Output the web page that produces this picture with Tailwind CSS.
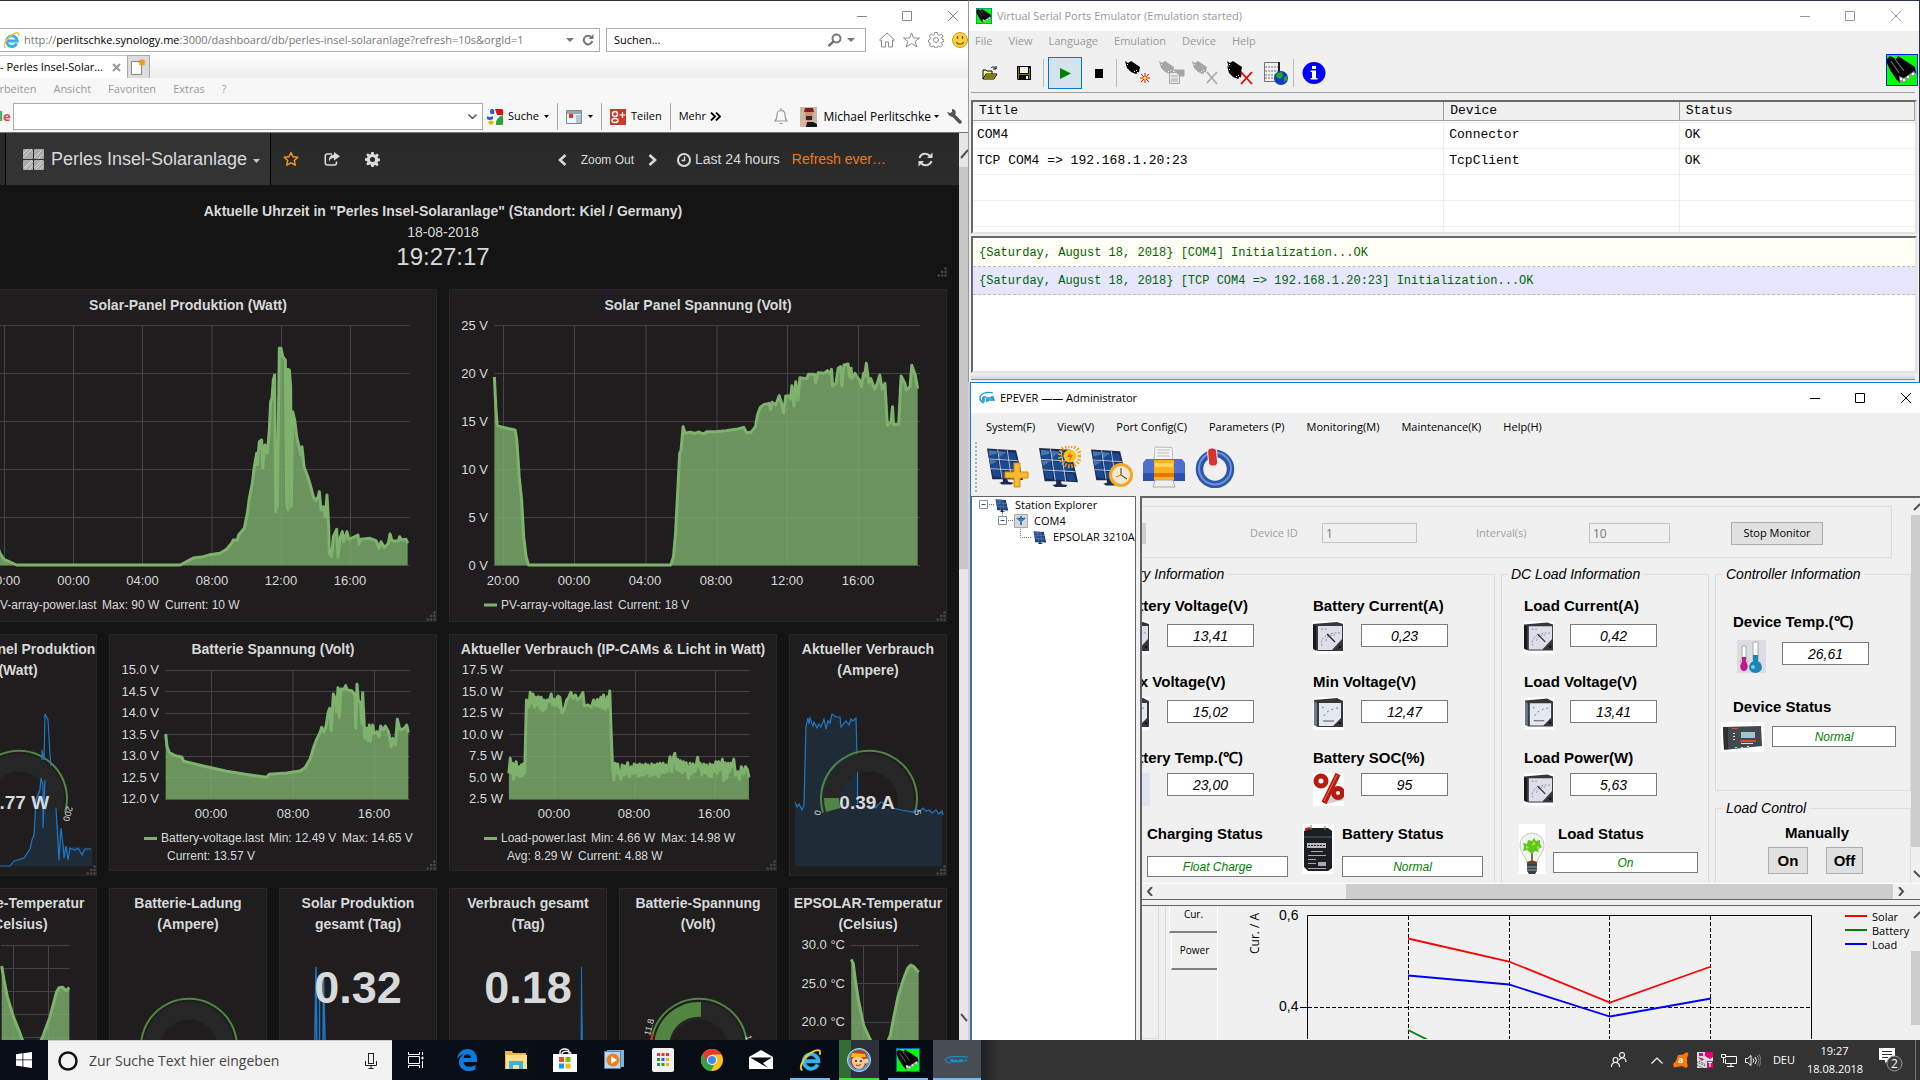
<!DOCTYPE html>
<html lang="de">
<head>
  <meta charset="UTF-8" />
  <meta name="viewport" content="width=device-width, initial-scale=1.0"/>
  <title>Perles Insel-Solaranlage</title>
  <script src="https://cdn.jsdelivr.net/npm/@tailwindcss/browser@4"></script>
</head>
<body class="h-screen flex flex-col overflow-hidden bg-[#2b3240] font-['Open_Sans',sans-serif] text-[11px] text-black">

  <!-- Shared symbols -->
  <svg class="hidden">
    <symbol id="grip" viewBox="0 0 10 10"><g fill="#4a4a4a"><circle cx="8.500" cy="1.500" r="1.300"/><circle cx="5.200" cy="5" r="1.300"/><circle cx="8.500" cy="5" r="1.300"/><circle cx="1.700" cy="8.500" r="1.300"/><circle cx="5.200" cy="8.500" r="1.300"/><circle cx="8.500" cy="8.500" r="1.300"/></g></symbol>
    <symbol id="meter" viewBox="0 0 31 33">
      <path fill="#fff" d="M0 0h31v33H0z"/><path fill="#34373c" d="M0 3 24 1l6 2v27H5L0 28z"/><path fill="#16181b" d="M0 4l3 1v25l-3-3z"/>
      <path fill="#dcdfe9" d="M5 5h24v13l-10 11H5z"/><path stroke="#889" stroke-width=".9" fill="none" d="M8 8h6M9 25c-3-8 6-14 18-13M13 20c0-4 4-6 9-6" stroke-dasharray="2 1.500"/><path stroke="#222" stroke-width="1.200" d="m14 13 8 8"/><circle cx="27" cy="26" r="1.300" fill="#111"/>
    </symbol>
    <symbol id="meter2" viewBox="0 0 31 33">
      <path fill="#fff" d="M0 0h31v33H0z"/><path fill="#34373c" d="M1 3 24 1l6 3v26H5L1 28z"/><path fill="#6d7b88" d="M1 4l3 2v24l-3-3z"/>
      <path fill="#e2e9f1" d="M6 6h22v15l-8 8H6z"/><path stroke="#778" stroke-width="1" fill="none" d="M9 10l2 1M11 19c2-4 6-7 14-8" stroke-dasharray="2 3"/><path stroke="#555" d="M10 24h11"/><circle cx="27" cy="26" r="1.300" fill="#111"/>
    </symbol>
    <symbol id="panel" viewBox="0 0 42 42">
      <path fill="#1c2a50" d="m0 1 33 2 8 34-18-1 1 3 6 1-2 2H17l-3-2 4-1v-3H6z"/><path fill="#174a93" d="m2 3 9 1 1 9-9-1zM13 4l9 1 2 9-10-1zM24 5l8 1 2 9-9-1zM3 14l9 1 2 9-9-1zM15 15l9 1 2 9-10-1zM26 16l8 1 2 9-9-1zM5 25l9 1 1 8-8-1zM16 26l10 1 1 8-10-1zM28 27l8 1 3 8-9-1z"/><path fill="#6f9fd8" opacity=".5" d="m2 3 9 1v3L2 9zM13 4l9 1-8 6zM3 14l9 1-8 5z"/><path stroke="#dce8fa" stroke-width=".9" fill="none" d="m12 2 5 33M23 3l5 33M2 13l33 2M4 24l34 2"/>
    </symbol>
    <symbol id="plug" viewBox="0 0 32 32">
      <path fill="#0f0" d="M0 0h32v32H0z"/><path fill="#000" d="m1 5 3-3 6 3 2-3 17 11 1 6-16 10-4-4-6-9-3-7z"/><path stroke="#888" fill="none" d="M5 7l8 12M9 5l9 12"/><path fill="#999" d="m13 22 5 2 10-7 2 3-16 10z"/><path fill="#fff" d="M14 24h2v2h-2zM17 25h2v2h-2zM21 22h2v2h-2zM26 19h2v2h-2z"/><path fill="none" stroke="#0018ff" d="M.5.5h31v31H.5z"/>
    </symbol>
    <symbol id="conn" viewBox="0 0 16 16"><path d="M0 1l3 2 3-2 9 6-1 5-3 2-5-2-4-4z"/><path fill="#fff" d="M9 11h1v1H9zM11 10h1v1h-1zM12 12h1v1h-1zM2 4h1v1H2z"/></symbol>
    <symbol id="winbtns" viewBox="0 0 102 12"><path fill="none" stroke="currentColor" d="M0 6.500h10M45.500 1.500h9v9h-9zM91 1l10 10M101 1 91 11"/></symbol>
    <symbol id="ie" viewBox="0 0 20 20"><path fill="none" stroke="#35b1ea" stroke-width="3.400" d="M16.200 13.500A6.300 6.300 0 1 1 16.800 10.600H6"/><path fill="none" stroke="#f6c62f" stroke-width="1.700" d="M3 18.500C-1 17 4 7 11 3s8-1.500 7 2"/></symbol>
  </svg>

  <main class="flex-1 min-h-0 grid grid-cols-[121fr_119fr]">

    <!-- Internet Explorer -->
    <section class="min-w-0 min-h-0 flex flex-col overflow-hidden border-t border-[#333] bg-white">
      <div class="h-[27px] flex justify-end items-center pt-[2px] pr-[9px]">
        <svg class="w-[102px] h-3 text-[#888]"><use href="#winbtns"/></svg>
      </div>
      <div class="h-6 flex gap-[6px] text-[#777]">
        <div class="w-[600px] flex items-center border border-l-0 border-[#adadad] pl-[3px] pr-[5px]">
          <svg class="w-[17px] h-[17px] mr-1"><use href="#ie"/></svg>
          <span class="flex-1 whitespace-nowrap">http://<span class="text-black">perlitschke.synology.me</span>:3000/dashboard/db/perles-insel-solaranlage?refresh=10s&amp;orgId=1</span>
          <svg class="w-2 h-1 mr-2" viewBox="0 0 8 4"><path fill="#777" d="M0 0h8L4 4z"/></svg>
          <svg class="w-3 h-3" viewBox="0 0 12 12"><path fill="none" stroke="#777" stroke-width="2" d="M9.500 3.500A4.300 4.300 0 1 0 10.300 7"/><path fill="#777" d="M11.500 0v5h-5z"/></svg>
        </div>
        <div class="w-[260px] flex items-center border border-[#adadad] px-[7px]">
          <input aria-label="Suchen" class="flex-1 min-w-0 outline-none placeholder:text-black" placeholder="Suchen..."/>
          <svg class="w-[14px] h-[14px] mr-[5px]" viewBox="0 0 14 14"><circle cx="8.500" cy="5.500" r="4" fill="none" stroke="#777" stroke-width="2"/><path stroke="#777" stroke-width="2.400" d="m5.500 8.500-5 4.500"/></svg>
          <svg class="w-2 h-1 mr-[3px]" viewBox="0 0 8 4"><path fill="#777" d="M0 0h8L4 4z"/></svg>
        </div>
        <div class="flex items-center gap-2 pl-[7px] text-[#8a8a8a]">
          <svg class="w-4 h-4" viewBox="0 0 16 16" fill="none" stroke="currentColor"><path d="M.5 8 8 1l7.500 7-1 .8-1-.8v7h-4v-5h-3v5h-4V8l-1 .8z"/></svg>
          <svg class="w-[17px] h-4" viewBox="0 0 17 16" fill="none" stroke="currentColor"><path d="m8.500 1 2 5h6l-4.500 3.500 2 5.500-5.500-3.500L3 15l2-5.500L.5 6h6z"/></svg>
          <svg class="w-4 h-4" viewBox="0 0 16 16" fill="none" stroke="currentColor"><path d="M6.500.5h3l.3 2 1.600.8 1.900-1.200 1.700 2-1.200 1.800.5 1.400 1.700.5v1.500l-2 .7-.5 1.500 1.100 1.700-2 1.900-1.700-1.200-1.500.6-.4 1.500h-2l-.5-1.500-1.600-.6-1.700 1.200-1.900-1.900L2.400 12l-.6-1.500-1.300-.5V8l1.400-.5.6-1.600L1.200 4l2-2 1.700 1.300 1.400-.7z"/><circle cx="8" cy="8" r="2.500"/></svg>
          <svg class="w-4 h-4" viewBox="0 0 16 16"><circle cx="8" cy="8" r="7.500" fill="#fbd13c" stroke="#c99a1b"/><path fill="none" stroke="#6b4e00" stroke-width="1.200" d="M5.500 4v3M10.500 4v3M4 10c2 3 6 3 8 0"/></svg>
        </div>
      </div>
      <div class="h-[26px] flex pt-[3px] bg-linear-to-b from-white to-[#ececec]">
        <div class="w-[127px] flex items-center justify-between pr-[6px] bg-white border-t border-[#c4c4c4] whitespace-nowrap">- Perles Insel-Solar...
          <svg class="w-[9px] h-[9px]" viewBox="0 0 9 9"><path stroke="#999" stroke-width="2" d="m1 1 7 7M8 1 1 8"/></svg>
        </div>
        <button aria-label="Neuer Tab" class="w-[23px] flex items-center justify-center bg-[#dcdcdc] border border-b-0 border-[#a8a8a8]">
          <svg class="w-[15px] h-4" viewBox="0 0 15 16"><path fill="#fff" stroke="#888" d="M.5 2.500h10v13H.5z"/><path stroke="#f09a1a" stroke-width="1.400" d="M11 0v7M7.500 3.500h7M8.500 1l5 5M13.500 1l-5 5"/></svg>
        </button>
      </div>
      <nav class="h-[23px] flex items-center gap-[17px] bg-[#f7f7f7] text-[#999]">
        <a href="#" class="-ml-5">Bearbeiten</a><a href="#">Ansicht</a><a href="#">Favoriten</a><a href="#">Extras</a><a href="#">?</a>
      </nav>
      <div class="h-8 flex items-center bg-[#f7f7f7] border-b border-[#777]">
        <span class="w-[14px] font-bold text-[13px] text-[#ea4335] -ml-px"><span class="text-[#34a853]">l</span>e</span>
        <div class="w-[470px] h-[27px] flex items-center border border-[#a9acb2] bg-white pr-[5px]">
          <input aria-label="Google-Suche" class="flex-1 outline-none"/>
          <svg class="w-[9px] h-[5px]" viewBox="0 0 9 5"><path fill="none" stroke="#444" stroke-width="1.300" d="m.5.500 4 4 4-4"/></svg>
        </div>
        <button class="flex items-center gap-[5px] pl-1 pr-2 h-[27px] border-r border-[#aaa]">
          <svg class="w-4 h-4" viewBox="0 0 16 16"><path fill="#1d62d0" d="M4 0h2q2 1 1 5H4Q2 3 4 0z"/><path fill="#e01010" d="M8 0h7l1 1v5H10z"/><path fill="#1d62d0" d="M0 7q3 2 6 0v3q-3 2-6 0z"/><path fill="#2aa33a" d="M16 6v9l-1 1H9q-1-7 7-10z"/><path fill="#f5b400" d="M1 13q3-3 6 0-1 3-3 3t-3-3z"/></svg>
          Suche <svg class="w-[5px] h-[3px]" viewBox="0 0 5 3"><path d="M0 0h5L2.500 3z"/></svg>
        </button>
        <button aria-label="Ansicht" class="flex items-center gap-[6px] px-2 h-[27px] border-r border-[#aaa]">
          <svg class="w-4 h-4" viewBox="0 0 16 16"><path fill="#eef3f7" stroke="#7c8a96" d="M.5 1.500h15v13H.5z"/><path fill="#9aa6b0" d="M1 2h14v3H1z"/><path fill="#d33" d="M3 5h4v4H3z"/><path fill="#b9c3cc" d="M10 6h5v8h-5z"/></svg>
          <svg class="w-[5px] h-[3px]" viewBox="0 0 5 3"><path d="M0 0h5L2.500 3z"/></svg>
        </button>
        <button class="flex items-center gap-[5px] px-2 h-[27px] border-r border-[#aaa]">
          <svg class="w-4 h-4" viewBox="0 0 16 16"><path fill="#c8392b" d="M0 0h16v16H0z"/><circle cx="5" cy="5" r="2.500" fill="none" stroke="#fff" stroke-width="1.400"/><ellipse cx="5" cy="11.500" rx="3" ry="2" fill="none" stroke="#fff" stroke-width="1.400"/><path stroke="#fff" stroke-width="1.200" d="M12.500 3v6M9.500 6h6"/></svg>
          Teilen
        </button>
        <button class="flex items-center gap-1 px-2">Mehr <svg class="w-[11px] h-[9px]" viewBox="0 0 11 9"><path fill="none" stroke="#000" stroke-width="1.800" d="m1 .500 4 4-4 4M6 .5l4 4-4 4"/></svg></button>
        <div class="ml-auto flex items-center">
          <svg class="w-[14px] h-[17px] mr-3" viewBox="0 0 14 17"><path fill="none" stroke="#999" stroke-width="1.200" d="M1 13c2-2 2-3 2-6s2-4.500 4-4.500S11 4 11 7s0 4 2 6zM7 0v2M5.500 15.500h3"/></svg>
          <svg class="w-[17px] h-5 mr-[6px]" viewBox="0 0 17 20"><path fill="#c9b7a5" d="M0 0h17v20H0z"/><path fill="#7a1f22" d="M5 1h8l1 4H4z"/><path fill="#cf8f74" d="M5 5h8v7l-4 3-4-3z"/><path fill="#3d2520" d="M6 9h6v4H6z"/><path fill="#e0b49b" d="M1 13h5v7H1z"/><path fill="#151515" d="M6 20l1-5h6l4 2v3z"/></svg>
          <span class="text-[12px]">Michael Perlitschke</span>
          <svg class="w-[5px] h-[3px] ml-[3px] mr-2" viewBox="0 0 5 3"><path d="M0 0h5L2.500 3z"/></svg>
          <svg class="w-[15px] h-[15px] mr-[6px]" viewBox="0 0 15 15"><path stroke="#555" stroke-width="3.500" stroke-linecap="round" d="m6 6 7 7"/><path fill="#555" d="M0 3l3 1 2-1V0c3 0 5 3 3 6S2 8 0 3z"/></svg>
        </div>
      </div>

      <!-- Grafana -->
      <div class="flex-1 min-h-0 flex font-['Liberation_Sans',Arial,sans-serif] text-[#d8d9da]">
        <div class="flex-1 min-w-0 flex flex-col overflow-hidden bg-[#141414]">
          <header class="h-[52px] shrink-0 flex items-center bg-linear-to-b from-[#292929] to-[#2c2c2c] text-[14px]">
            <button class="h-full ml-[5px] pl-[17px] pr-[10px] flex items-center border-x border-black bg-[#333] text-[18px] whitespace-nowrap">
              <svg class="w-[21px] h-[21px] mr-[7px]" viewBox="0 0 21 21"><g fill="#aaa"><rect width="10" height="10" rx="1"/><rect x="11" width="10" height="10" rx="1"/><rect y="11" width="10" height="10" rx="1"/><rect x="11" y="11" width="10" height="10" rx="1"/></g><path stroke="#d8d8d8" d="M0 5l5-5M0 9l9-9M1 19 9 11M11 9l8-8M13 20l7-7M17 20l3-3M2 20l8-8M6 20l4-4M15 10l5-5M11 19l8-8"/></svg>
              Perles Insel-Solaranlage
              <svg class="w-[7px] h-1 ml-[6px] mt-1" viewBox="0 0 7 4"><path fill="#c8c8c8" d="M0 0h7L3.500 4z"/></svg>
            </button>
            <svg class="w-4 h-4 ml-3" viewBox="0 0 16 16"><path fill="none" stroke="#f79a1e" stroke-width="1.400" stroke-linejoin="round" d="m8 1.500 2 4.300 4.800.5-3.500 3.200 1 4.700L8 11.800l-4.300 2.400 1-4.700L1.200 6.300 6 5.800z"/></svg>
            <svg class="w-4 h-4 ml-[25px]" viewBox="0 0 16 16"><path fill="none" stroke="#d8d9da" stroke-width="1.600" d="M8 3H3.500Q1.300 3 1.300 5v7q0 2 2.200 2h7q2 0 2-2v-1.500"/><path fill="#d8d9da" d="M10 1l6 4.300L10 9.500V7Q6 7 5 11 4 4 10 3.500z"/></svg>
            <svg class="w-[15px] h-[15px] ml-[25px]" viewBox="0 0 16 16"><path fill="#d8d9da" fill-rule="evenodd" d="M6.700 0h2.600l.4 2.300 1.400.6 1.900-1.300 1.800 1.800-1.400 1.900.6 1.400 2 .4v2.500l-2.100.5-.6 1.400 1.300 1.900-1.800 1.800-1.900-1.300-1.400.6L9.300 16H6.700l-.4-2.200-1.400-.6L3 14.500l-1.800-1.800 1.300-1.900L2 9.600l-2-.4V6.700l2.100-.4.6-1.400L1.300 3 3 1.300l1.900 1.300 1.400-.5zM8 5.300A2.700 2.700 0 1 0 8 10.700 2.700 2.700 0 0 0 8 5.300z"/></svg>
            <div class="ml-auto pt-px flex items-center whitespace-nowrap">
              <svg class="w-[9px] h-3 mr-[14px]" viewBox="0 0 9 12"><path fill="none" stroke="#d8d9da" stroke-width="2.600" d="M7.500 1 2 6l5.500 5"/></svg>
              <span class="text-[12px]">Zoom Out</span>
              <svg class="w-[9px] h-3 ml-[14px] mr-5" viewBox="0 0 9 12"><path fill="none" stroke="#d8d9da" stroke-width="2.600" d="M1.500 1 7 6l-5.500 5"/></svg>
              <svg class="w-[14px] h-[14px] mr-1" viewBox="0 0 14 14" fill="none" stroke="#d8d9da"><circle cx="7" cy="7" r="6" stroke-width="2"/><path stroke-width="1.400" d="M7.500 3.500v4H4.500"/></svg>
              <span>Last 24 hours</span>
              <span class="ml-3 text-[#eb7b18]">Refresh ever…</span>
              <svg class="w-[15px] h-[15px] ml-8 mr-[26px]" viewBox="0 0 15 15"><path fill="none" stroke="#d8d9da" stroke-width="2" d="M1.500 6C3 1 9 .5 12 4M13.500 9C12 14 6 14.500 3 11"/><path fill="#d8d9da" d="M14.500.5V6H9zM.5 14.500V9H6z"/></svg>
            </div>
          </header>

          <div class="-ml-[61px] pr-3 grid grid-cols-6 gap-3 items-start text-[14px] leading-[21px] font-bold text-center">
            <div class="relative col-span-6 h-[92px] pt-4">
              <h1>Aktuelle Uhrzeit in "Perles Insel-Solaranlage" (Standort: Kiel / Germany)</h1>
              <p class="font-normal">18-08-2018</p>
              <p class="font-normal text-[24px] leading-7">19:27:17</p>
              <svg class="absolute right-0 bottom-0 w-[10px] h-[10px]"><use href="#grip"/></svg>
            </div>

            <div class="col-span-3 border border-[#292929] bg-[#1f1d1e] pt-[5px]">
              <h2>Solar-Panel Produktion (Watt)</h2>
              <svg class="block w-full font-normal" viewBox="-60 316 496 305" fill="#d8d9da" font-size="13">
                <path stroke="#464445" d="M-20 325.500H410M-20 373.500H410M-20 421.500H410M-20 469.500H410M-20 517.500H410M-20 565.500H410M4.500 325v240M73.500 325v240M142.500 325v240M212 325v240M281.500 325v240M350.500 325v240"/>
                <g transform="translate(0 280) scale(.33333)"><polyline data-base="856" points="-60,640 -30,740 0,820 12,838 50,855 540,855 560,845 580,834 610,830 630,824 660,820 680,808 695,790 700,780 712,780 716,765 733,745 742,700 748,655 757,610 763,560 770,520 772,555 778,485 785,480 788,565 795,495 802,520 808,450 812,365 816,355 820,300 824,285 827,695 832,680 838,205 843,205 848,230 856,240 860,670 864,690 864,268 868,270 872,320 874,680 878,395 884,420 890,470 903,525 906,500 912,560 925,595 930,612 940,650 947,662 955,650 958,635 963,690 970,680 976,712 981,645 986,740 988,820 995,830 1000,770 1010,748 1014,832 1020,775 1027,755 1031,785 1041,755 1046,778 1065,770 1074,765 1077,792 1082,778 1110,775 1128,782 1137,805 1143,785 1153,803 1165,790 1170,762 1176,782 1195,783 1199,770 1205,780 1218,778 1223,790"/></g>
                <g text-anchor="middle"><text x="4" y="584.500">20:00</text><text x="73.500" y="584.500">00:00</text><text x="142.500" y="584.500">04:00</text><text x="212" y="584.500">08:00</text><text x="281" y="584.500">12:00</text><text x="350" y="584.500">16:00</text></g>
                <g font-size="12"><text x="-8" y="609">PV-array-power.last</text><text x="102" y="609">Max: 90 W</text><text x="165" y="609">Current: 10 W</text></g>
                <use href="#grip" x="426" y="611" width="10" height="10"/>
              </svg>
            </div>

            <div class="col-span-3 border border-[#292929] bg-[#1f1d1e] pt-[5px]">
              <h2>Solar Panel Spannung (Volt)</h2>
              <svg class="block w-full font-normal" viewBox="450 316 496 305" fill="#d8d9da" font-size="13">
                <path stroke="#464445" d="M494 325.500H920M494 373.500H920M494 421.500H920M494 469.500H920M494 517.500H920M494 565.500H920M503.500 325v240M574.500 325v240M646 325v240M717 325v240M787.500 325v240M858.500 325v240"/>
                <g transform="translate(440 280) scale(.34437 .33333)"><polyline data-base="856" points="158,291 162,380 166,435 175,440 200,446 218,450 223,480 230,590 237,660 243,770 250,830 257,855 670,855 678,830 684,760 690,640 696,520 700,510 706,440 712,460 725,457 740,460 752,456 765,462 775,455 800,455 830,452 860,448 882,442 890,458 903,457 916,440 922,405 930,382 940,374 955,370 960,388 964,367 975,375 985,347 992,370 998,400 1004,348 1015,348 1018,358 1022,317 1028,378 1033,305 1040,360 1045,293 1065,296 1070,283 1088,283 1091,308 1098,278 1115,280 1125,272 1132,282 1137,268 1140,318 1150,310 1156,265 1163,260 1167,318 1173,255 1185,252 1189,290 1194,265 1196,296 1205,280 1210,290 1218,300 1224,320 1230,280 1233,290 1238,250 1245,308 1251,296 1262,328 1270,310 1277,285 1284,328 1292,310 1299,436 1310,425 1314,380 1317,434 1332,432 1339,288 1350,310 1354,330 1365,320 1370,256 1380,285 1387,326"/></g>
                <g text-anchor="end"><text x="488" y="330">25 V</text><text x="488" y="378">20 V</text><text x="488" y="426">15 V</text><text x="488" y="474">10 V</text><text x="488" y="522">5 V</text><text x="488" y="570">0 V</text></g>
                <g text-anchor="middle"><text x="503" y="584.500">20:00</text><text x="574" y="584.500">00:00</text><text x="645" y="584.500">04:00</text><text x="716" y="584.500">08:00</text><text x="787" y="584.500">12:00</text><text x="858" y="584.500">16:00</text></g>
                <path stroke="#7eb26d" stroke-width="3" d="M484 605h13"/>
                <g font-size="12"><text x="501" y="609">PV-array-voltage.last</text><text x="618" y="609">Current: 18 V</text></g>
                <use href="#grip" x="936" y="611" width="10" height="10"/>
              </svg>
            </div>

            <div class="border border-[#292929] bg-[#1f1d1e] pt-1">
              <h2>Solar-Panel Produktion (Watt)</h2>
              <svg class="block w-full" viewBox="-60 681 156 194" fill="#d8d9da">
                <path fill="#1f2c38" d="M-55 866h66l4-5 9-4 6-9 3-8 3-45 5-15 6-2 8 30 2 8 5 30 30 2v18z"/>
                <path fill="#262626" d="M-24 812a45 45 0 1 1 86 0l-15-4a29 29 0 1 0-56 0z"/>
                <path fill="none" stroke="#508642" stroke-width="2" d="M-27 812.500a48 48 0 1 1 92 0"/>
                <polyline fill="none" stroke="#1f78c1" stroke-width="1.200" points="0,866 10,866 14,861 24,858 30,849 32,840 34,835 36,800 40,790 41,778 43,785 43,828 45,780"/>
                <polyline fill="none" stroke="#1f78c1" stroke-width="1.200" points="42,760 42,750 44,760 45,714 48,720 50,755 51,766"/>
                <polyline fill="none" stroke="#1f78c1" stroke-width="1.200" points="56,808 59,860 61,828 63,845 64,858 66,846 68,860 70,848 75,850 78,848 82,855 85,849 91,849"/>
                <text x="19" y="809" font-size="19" text-anchor="middle">9.77 W</text><text font-size="9" font-weight="400" text-anchor="middle" transform="translate(65 813) rotate(105)">200</text>
                <use href="#grip" x="86" y="865" width="10" height="10"/>
              </svg>
            </div>

            <div class="col-span-2 border border-[#292929] bg-[#1f1d1e] pt-1">
              <h2>Batterie Spannung (Volt)</h2>
              <svg class="block w-full font-normal" viewBox="110 660 326 210" fill="#d8d9da" font-size="13">
                <path stroke="#464445" d="M165 670.500h245M165 691.500h245M165 713.500h245M165 734.500h245M165 756.500h245M165 777.500h245M165 799.500h245M211.500 670v129M293 670v129M374.500 670v129"/>
                <g transform="translate(0 620) scale(.33333)"><polyline data-base="538" points="497,342 501,380 508,398 525,407 545,411 551,424 600,436 680,454 750,465 800,472 808,463 860,459 900,453 915,443 930,418 940,385 950,358 960,338 965,322 972,335 978,320 984,280 989,265 994,333 1000,222 1005,235 1010,275 1014,203 1018,292 1023,207 1032,208 1037,197 1042,210 1055,212 1065,225 1067,325 1071,193 1075,240 1082,250 1086,310 1088,218 1092,300 1094,355 1100,325 1103,362 1108,315 1111,365 1118,315 1122,340 1130,335 1137,350 1142,318 1150,330 1156,318 1165,335 1174,380 1178,355 1186,375 1192,298 1200,330 1213,325 1220,315 1225,338"/></g>
                <g text-anchor="end"><text x="159" y="674">15.0 V</text><text x="159" y="696">14.5 V</text><text x="159" y="717">14.0 V</text><text x="159" y="739">13.5 V</text><text x="159" y="760">13.0 V</text><text x="159" y="782">12.5 V</text><text x="159" y="803">12.0 V</text></g>
                <g text-anchor="middle"><text x="211" y="818">00:00</text><text x="293" y="818">08:00</text><text x="374" y="818">16:00</text></g>
                <path stroke="#7eb26d" stroke-width="3" d="M144 838.500h13"/>
                <g font-size="12"><text x="161" y="842">Battery-voltage.last</text><text x="269" y="842">Min: 12.49 V</text><text x="342" y="842">Max: 14.65 V</text><text x="167" y="860">Current: 13.57 V</text></g>
                <use href="#grip" x="426" y="860" width="10" height="10"/>
              </svg>
            </div>

            <div class="col-span-2 border border-[#292929] bg-[#1f1d1e] pt-1">
              <h2>Aktueller Verbrauch (IP-CAMs &amp; Licht in Watt)</h2>
              <svg class="block w-full font-normal" viewBox="450 660 326 210" fill="#d8d9da" font-size="13">
                <path stroke="#464445" d="M509 670.500h241M509 691.500h241M509 713.500h241M509 734.500h241M509 756.500h241M509 777.500h241M509 799.500h241M554.500 670v129M635.500 670v129M715.500 670v129"/>
                <g transform="translate(440 620) scale(.34437 .33333)"><polyline data-base="538" points="200,460 204,415 208,460 211,430 214,478 218,440 221,425 225,465 229,440 232,470 236,435 239,467 242,432 246,460 251,240 258,262 262,217 266,250 270,222 274,262 278,232 282,255 286,230 290,265 294,232 298,272 302,240 306,268 311,240 317,245 323,222 327,255 331,238 335,258 339,235 343,228 346,262 348,232 354,278 360,272 368,240 374,232 380,217 386,235 393,225 399,240 407,232 415,218 419,258 430,255 440,262 446,240 452,258 457,238 462,260 467,232 471,265 475,225 480,268 486,230 489,262 493,213 497,340 501,440 505,480 508,430 512,460 516,432 520,462 525,478 529,435 533,465 537,438 541,462 545,428 550,470 556,440 560,462 564,432 568,460 572,435 576,468 580,432 584,465 588,435 592,466 597,432 601,460 605,435 610,468 615,432 619,465 623,435 627,462 631,432 635,470 639,430 643,460 648,430 652,458 656,435 661,455 668,410 673,455 677,415 682,400 686,448 690,418 694,452 698,422 703,458 707,425 711,452 715,428 718,452 722,475 726,430 731,462 735,432 741,455 748,412 752,440 756,430 760,465 766,432 770,458 774,435 779,468 784,432 788,470 792,435 797,455 801,425 805,460 809,425 814,450 820,418 824,482 828,428 833,475 837,430 841,455 845,430 849,440 853,418 858,465 865,455 870,478 875,440 881,462 887,440 893,450 897,472"/></g>
                <g text-anchor="end"><text x="503" y="674">17.5 W</text><text x="503" y="696">15.0 W</text><text x="503" y="717">12.5 W</text><text x="503" y="739">10.0 W</text><text x="503" y="760">7.5 W</text><text x="503" y="782">5.0 W</text><text x="503" y="803">2.5 W</text></g>
                <g text-anchor="middle"><text x="554" y="818">00:00</text><text x="634" y="818">08:00</text><text x="714" y="818">16:00</text></g>
                <path stroke="#7eb26d" stroke-width="3" d="M484 838.500h13"/>
                <g font-size="12"><text x="501" y="842">Load-power.last</text><text x="591" y="842">Min: 4.66 W</text><text x="661" y="842">Max: 14.98 W</text><text x="507" y="860">Avg: 8.29 W</text><text x="578" y="860">Current: 4.88 W</text></g>
                <use href="#grip" x="766" y="860" width="10" height="10"/>
              </svg>
            </div>

            <div class="border border-[#292929] bg-[#1f1d1e] pt-1">
              <h2>Aktueller Verbrauch (Ampere)</h2>
              <svg class="block w-full" viewBox="790 681 156 194" fill="#d8d9da">
                <polyline fill="#1f2c38" points="795,866 795,802 797,808 800,806 803,810 805,726 809,720 813,726 817,722 822,728 828,720 832,714 840,718 842,727 850,720 856,720 858,806 870,806 880,806 900,810 910,812 920,810 930,811 942,812 942,866"/>
                <polyline fill="none" stroke="#1f78c1" stroke-width="1.200" points="795,802 797,807 799,804 802,810 804,805 806,726 808,718 809,724 810,718 813,726 814,722 817,728 819,724 821,727 824,719 826,729 828,721 830,723 832,714 836,717 840,717 841,727 846,721 849,725 851,719 853,721 856,718 857,754"/>
                <path fill="#262626" d="M826 812a45 45 0 1 1 86 0l-15-4a29 29 0 1 0-56 0z"/>
                <path fill="#508642" d="M826 812a45 45 0 0 1-2-14h15a29 29 0 0 0 1.500 10z"/>
                <path fill="none" stroke="#508642" stroke-width="2" d="M823 812.500a48 48 0 1 1 92 0"/>
                <path fill="none" stroke="#1f78c1" stroke-width="1.200" d="M857.500 772v32M866 807l4-1 5 2 6-6 6 3 6 3 8 2 12 2 3-3 4 2 3-3 3 3 3-1 3 3 4-3 3 4 3-3 1 4"/>
                <text x="867" y="809" font-size="19" text-anchor="middle">0.39 A</text>
                <text font-size="9" font-weight="400" transform="translate(820 816) rotate(-75)">0</text><text font-size="9" font-weight="400" transform="translate(914 811) rotate(75)">5</text>
                <use href="#grip" x="936" y="865" width="10" height="10"/>
              </svg>
            </div>

            <div class="border border-[#292929] bg-[#1f1d1e] pt-1">
              <h2>Batterie-Temperatur (Celsius)</h2>
              <svg class="block w-full font-normal" viewBox="-60 935 156 150">
                <path stroke="#464445" d="M1 945.500h69M1 968.500h69M1 991.500h69M1 1014.500h69M1 1037.500h69M13.500 945v120M48.500 945v120"/>
                <g transform="translate(0 620) scale(.33333)"><polyline data-base="1300" points="5,1038 12,1080 22,1130 40,1190 58,1235 75,1280 115,1280 130,1245 150,1190 170,1115 177,1103 188,1102 198,1112 208,1103"/></g>
              </svg>
            </div>

            <div class="border border-[#292929] bg-[#1f1d1e] pt-1">
              <h2>Batterie-Ladung<br/>(Ampere)</h2>
              <svg class="block w-full" viewBox="110 935 156 150">
                <path fill="#262626" d="M146 1060a45 45 0 1 1 86 0l-15-4a29 29 0 1 0-56 0z"/>
                <path fill="none" stroke="#508642" stroke-width="2" d="M143 1060.500a48 48 0 1 1 92 0"/>
              </svg>
            </div>

            <div class="border border-[#292929] bg-[#1f1d1e] pt-1">
              <h2>Solar Produktion gesamt (Tag)</h2>
              <svg class="block w-full" viewBox="280 935 156 150" fill="#d8d9da">
                <path fill="none" stroke="#1f78c1" stroke-width="1.500" d="M314.500 1060l1.500-93 1 93M319.500 1060v-75M323 1060l.5-82 2 82"/>
                <text x="358" y="1003" font-size="45" text-anchor="middle">0.32</text>
              </svg>
            </div>

            <div class="border border-[#292929] bg-[#1f1d1e] pt-1">
              <h2>Verbrauch gesamt<br/>(Tag)</h2>
              <svg class="block w-full" viewBox="450 935 156 150" fill="#d8d9da">
                <path stroke="#1f78c1" fill="#1f78c1" d="M581 1060l.5-93 1 93z"/>
                <text x="528" y="1003" font-size="45" text-anchor="middle">0.18</text>
              </svg>
            </div>

            <div class="border border-[#292929] bg-[#1f1d1e] pt-1">
              <h2>Batterie-Spannung<br/>(Volt)</h2>
              <svg class="block w-full" viewBox="620 935 156 150" fill="#d8d9da">
                <path fill="#262626" d="M656 1060a45 45 0 1 1 86 0l-15-4a29 29 0 1 0-56 0z"/>
                <path fill="#508642" d="M656 1060a45 45 0 0 1 45-58v15a29 29 0 0 0-30 39z"/>
                <path fill="none" stroke="#508642" stroke-width="2" d="M653 1060.500a48 48 0 1 1 92 0"/>
                <path fill="none" stroke="#e5260f" stroke-width="2" d="M653 1060.500a48 48 0 0 1-.4-26"/>
                <text font-size="9" font-weight="400" transform="translate(650 1036) rotate(-75)">11.8</text><text font-size="9" font-weight="400" transform="translate(745 1036) rotate(75)">15</text>
              </svg>
            </div>

            <div class="border border-[#292929] bg-[#1f1d1e] pt-1">
              <h2 class="whitespace-nowrap">EPSOLAR-Temperatur<br/>(Celsius)</h2>
              <svg class="block w-full font-normal" viewBox="790 935 156 150" fill="#d8d9da" font-size="13">
                <path stroke="#464445" d="M851 945.500h68M851 983.500h68M851 1022.500h68M863.500 945v120M897.500 945v120"/>
                <g transform="translate(440 620) scale(.34437 .33333)"><polyline data-base="1300" points="1194,1018 1200,1030 1206,1080 1215,1140 1230,1215 1245,1250 1265,1290 1290,1290 1308,1245 1318,1190 1330,1130 1345,1080 1358,1045 1367,1035 1376,1040 1390,1057"/></g>
                <g text-anchor="end"><text x="845" y="949">30.0 °C</text><text x="845" y="988">25.0 °C</text><text x="845" y="1026">20.0 °C</text></g>
              </svg>
            </div>
          </div>
        </div>

        <!-- Page scrollbar -->
        <div class="w-[9px] shrink-0 flex flex-col bg-[#e6e6e6]">
          <svg class="w-[9px] h-[34px]" viewBox="0 0 9 34"><path fill="none" stroke="#505050" stroke-width="2" d="m2 25 7-8"/></svg>
          <div class="h-[402px] bg-[#c6c6c6]"></div>
          <svg class="w-[9px] h-[34px] mt-auto" viewBox="0 0 9 34"><path fill="none" stroke="#505050" stroke-width="2" d="m2 8 6 7"/></svg>
        </div>
      </div>
    </section>

    <div class="min-w-0 min-h-0 flex flex-col bg-[#d0d0d0]">
      <!-- Virtual Serial Ports Emulator -->
      <section class="h-[382px] shrink-0 flex flex-col border-t border-x border-t-[#2d3444] border-l-[#999] border-r-[#2d3444] bg-[#f0f0f0] text-[#999]">
        <div class="h-[30px] shrink-0 flex items-center bg-white pl-[7px] pr-[17px]">
          <svg class="w-4 h-4 mr-[5px]"><use href="#plug"/></svg>
          <span>Virtual Serial Ports Emulator (Emulation started)</span>
          <svg class="w-[102px] h-3 ml-auto"><use href="#winbtns"/></svg>
        </div>
        <nav class="h-[21px] flex items-center gap-4 pl-[6px]">
          <a href="#">File</a><a href="#">View</a><a href="#">Language</a><a href="#">Emulation</a><a href="#">Device</a><a href="#">Help</a>
        </nav>
        <div class="h-[41px] ml-[2px] mr-1 pt-[2px] pl-[2px] flex items-center border-b border-[#a0a0a0]">
          <button aria-label="Open" class="w-[34px] flex justify-center"><svg class="w-4 h-4" viewBox="0 0 16 16"><path fill="#ffff80" stroke="#000" d="M1 14V5h3l1 1h5v3M1 14l3-5h11l-3 5z"/><path fill="#808000" d="M4.500 9.500h9.500l-2.500 4H2z"/><path fill="none" stroke="#000" d="M9 3c2-2 4-1 5 1M14 1v3h-3"/></svg></button>
          <button aria-label="Save" class="w-[34px] flex justify-center"><svg class="w-[14px] h-[14px]" viewBox="0 0 14 14"><path fill="#000" d="M0 0h14v14H1l-1-1z"/><path fill="#808000" d="M1 1h1v12H1zM12 2h1v11h-1zM2 8h10v1H2z"/><path fill="#f0f0f0" d="M3 1h8v6H3zM9 10h2v3H9z"/></svg></button>
          <div class="h-7 border-l border-[#bbb] ml-[2px] mr-1"></div>
          <button aria-label="Start" class="w-[34px] h-8 flex items-center justify-center border border-[#0078d7] bg-[#d6e3ee]"><svg class="w-[11px] h-[11px]" viewBox="0 0 11 11"><path fill="#008000" d="M0 0v11l11-5.500z"/></svg></button>
          <button aria-label="Stop" class="w-[34px] flex justify-center"><span class="w-2 h-[9px] bg-black"></span></button>
          <div class="h-7 border-l border-[#bbb] mr-2"></div>
          <button aria-label="New device" class="w-[34px]"><svg class="w-[26px] h-[26px]" viewBox="0 0 26 26"><use href="#conn" width="16" height="16"/><path stroke="#f00" d="M20 13v10M15 18h10M16 14l8 8M24 14l-8 8"/><circle cx="20" cy="18" r="1.500" fill="#ff0"/></svg></button>
          <button aria-label="Properties" class="w-[33px] opacity-30"><svg class="w-[26px] h-[26px]" viewBox="0 0 26 26"><use href="#conn" width="16" height="16"/><path fill="#ddd" stroke="#000" d="M10.500 12.500h10v11h-10z"/><path stroke="#000" d="M12 16h7M12 19h7M12 21h7M14 10h11v6h-4"/></svg></button>
          <button aria-label="Delete" class="w-[35px] opacity-30"><svg class="w-[26px] h-[26px]" viewBox="0 0 26 26"><use href="#conn" width="16" height="16"/><path stroke="#000" stroke-width="1.500" d="m15 12 10 12M25 12 15 23"/></svg></button>
          <button aria-label="Delete all" class="w-[37px]"><svg class="w-[26px] h-[26px]" viewBox="0 0 26 26"><use href="#conn" width="16" height="16"/><use href="#conn" y="5" width="16" height="16"/><path stroke="#e00000" stroke-width="1.800" d="m14 12 11 12M25 12 14 24"/></svg></button>
          <button aria-label="Network" class="w-[29px]"><svg class="w-[26px] h-[26px]" viewBox="0 0 26 26"><path fill="#eee" stroke="#777" d="M.5 2.500h14v19H.5z"/><path fill="#222" d="M14 2h2v12h-2z"/><path stroke="#777" stroke-dasharray="2 1" d="M1 7h13M1 11h13M1 15h13M1 18h13"/><circle cx="17" cy="18" r="7" fill="#1138c8"/><path fill="#1bb01b" d="M13 13l5-1 1 4-3 3-4-2zM20 17l3-1v4l-3 2z"/></svg></button>
          <div class="h-7 border-l border-[#bbb] mr-2"></div>
          <button aria-label="Info"><svg class="w-6 h-[22px]" viewBox="0 0 24 22"><ellipse cx="12" cy="11" rx="11.500" ry="11" fill="#00f"/><path fill="#fff" d="M10 4h4v3h-4zM8.500 8.500H14V16h1.500v1.500h-7V16H10v-6H8.500z"/></svg></button>
          <svg class="w-8 h-8 ml-auto -mr-[3px] mb-[6px]"><use href="#plug"/></svg>
        </div>
        <div class="h-[134px] mt-[7px] mx-[2px] overflow-hidden border-2 border-t-[#696969] border-l-[#696969] border-r-[#e3e3e3] border-b-[#e3e3e3] bg-white font-['Liberation_Mono',monospace] text-[13px] text-black">
          <table class="w-full table-fixed border-collapse text-left">
            <colgroup><col class="w-1/2"/><col class="w-1/4"/><col class="w-1/4"/></colgroup>
            <thead><tr class="h-[18px] bg-[#f0f0f0] leading-4"><th class="font-normal pl-[6px] border-r border-b border-[#a0a0a0]">Title</th><th class="font-normal pl-[6px] border-r border-b border-[#a0a0a0]">Device</th><th class="font-normal pl-[6px] border-r border-b border-[#a0a0a0]">Status</th></tr></thead>
            <tbody>
              <tr class="h-[2px] border-b border-[#eee]"><td colspan="3"></td></tr>
              <tr class="h-[26px] border-b border-[#eee]"><td class="pl-1 border-r border-[#eee]">COM4</td><td class="pl-[5px] border-r border-[#eee]">Connector</td><td class="pl-[5px]">OK</td></tr>
              <tr class="h-[26px] border-b border-[#eee]"><td class="pl-1 border-r border-[#eee]">TCP COM4 =&gt; 192.168.1.20:23</td><td class="pl-[5px] border-r border-[#eee]">TcpClient</td><td class="pl-[5px]">OK</td></tr>
              <tr class="h-[26px] border-b border-[#eee]"><td class="border-r border-[#eee]"></td><td class="border-r border-[#eee]"></td><td></td></tr>
              <tr class="h-[26px] border-b border-[#eee]"><td class="border-r border-[#eee]"></td><td class="border-r border-[#eee]"></td><td></td></tr>
              <tr class="h-[26px]"><td class="border-r border-[#eee]"></td><td class="border-r border-[#eee]"></td><td></td></tr>
            </tbody>
          </table>
        </div>
        <div class="flex-1 mt-[2px] mx-[2px] border-2 border-t-[#696969] border-l-[#696969] border-r-[#e3e3e3] border-b-[#e3e3e3] bg-white font-['Liberation_Mono',monospace] text-[12px] text-[#006400]">
          <p class="h-[29px] leading-[31px] pl-[6px] border-b border-dashed border-[#bbb] bg-[#fffff6]">{Saturday, August 18, 2018} [COM4] Initialization...OK</p>
          <p class="h-[28px] leading-[29px] pl-[6px] border-b border-dashed border-[#bbb] bg-[#e6e6ff]">{Saturday, August 18, 2018} [TCP COM4 =&gt; 192.168.1.20:23] Initialization...OK</p>
        </div>
        <div class="h-[7px] ml-[2px] mr-1 mb-[2px] border-b border-[#8a8a8a] bg-linear-to-b from-[#f0f0f0] to-[#d8d8d8]"></div>
      </section>

      <!-- EPEVER -->
      <section class="flex-1 min-h-0 ml-[2px] flex flex-col border-t border-l border-[#1a7fd4] bg-[#f0f0f0]">
        <div class="h-[30px] shrink-0 flex items-center bg-white px-2">
          <svg class="w-4 h-4 mr-[5px]" viewBox="0 0 16 16"><path fill="none" stroke="#1b95d6" stroke-width="1.300" d="M14 3C7 1 1 4 1 8s2 4 4 5"/><path fill="none" stroke="#1b95d6" stroke-width="1.600" d="M4 7h3M4 7v4h2M4 9h2M8 7v4l2-1V7M12 7v4M15 7h-2l2 3h-2"/></svg>
          <span>EPEVER —— Administrator</span>
          <svg class="w-[102px] h-3 ml-auto"><use href="#winbtns"/></svg>
        </div>
        <nav class="h-7 shrink-0 flex items-center gap-[22px] pl-[15px] whitespace-nowrap">
          <a href="#">System(F)</a><a href="#">View(V)</a><a href="#">Port Config(C)</a><a href="#">Parameters (P)</a><a href="#">Monitoring(M)</a><a href="#">Maintenance(K)</a><a href="#">Help(H)</a>
        </nav>
        <div class="h-[55px] shrink-0 flex items-center gap-[10px] pl-1 pb-1">
          <div class="h-[50px] w-1 border-l-2 border-dotted border-[#b0b0b0]"></div>
          <button aria-label="Add station" class="-ml-[2px]"><svg class="w-[42px] h-[42px]" viewBox="0 0 42 42"><use href="#panel" width="37" height="40"/><path fill="#f9bb2b" stroke="#d18a0c" d="M27 17h6v9h8v6h-8v9h-6v-9h-9v-6h9z"/></svg></button>
          <button aria-label="Solar"><svg class="w-[42px] h-[42px]" viewBox="0 0 42 42"><use href="#panel" width="40" height="42"/><circle cx="31" cy="10" r="10" fill="none" stroke="#f39c1f" stroke-width="4" stroke-dasharray="1.500 1.700"/><circle cx="31" cy="10" r="6.500" fill="#ffc41c"/><path fill="#e96f0c" d="m32 5-4 6h3l-1 5 4-7h-3z"/></svg></button>
          <button aria-label="History"><svg class="w-[42px] h-[42px]" viewBox="0 0 42 42"><use href="#panel" width="37" height="42"/><circle cx="30" cy="29" r="10.500" fill="#f0e8cf" stroke="#f5a623" stroke-width="3"/><path fill="none" stroke="#555" stroke-width="1.200" d="M30 22v7l6 4"/><path stroke="#e96f0c" d="m30 29-5 2"/></svg></button>
          <button aria-label="Print"><svg class="w-[42px] h-[42px]" viewBox="0 0 42 42"><path fill="#f5f5f5" stroke="#bbb" d="m12 1 17 .5 1 14H11z"/><path stroke="#bbb" d="M14 4h13M14 7h12M14 10h13"/><path fill="#4c6fd0" d="M3 13h36l3 4v18H0V17z"/><path fill="#2d4fae" d="M0 27h42v8H0z"/><path fill="#ffb020" d="M11 14h20v20H11z"/><path fill="#ffd75a" d="M12 17h18v4H12z"/><path fill="#e8750a" d="M11 27h20v4H11z"/><path fill="#eee" stroke="#aaa" d="m12 34-2 7h22l-2-7z"/></svg></button>
          <button aria-label="Exit"><svg class="w-[40px] h-[42px]" viewBox="0 0 40 42"><circle cx="20" cy="23" r="15.500" fill="none" stroke="#2d57a8" stroke-width="7.500"/><circle cx="20" cy="22.500" r="16" fill="none" stroke="#6b93da" stroke-width="2"/><rect x="13" y="2" width="9" height="18" rx="4" fill="#d93030" stroke="#f0f0f0" transform="rotate(-5 18 10)"/></svg></button>
        </div>
        <div class="flex-1 min-h-0 flex gap-1">
          <div class="w-[165px] shrink-0 border-t border-r border-l border-[#646464] bg-white pl-[7px] overflow-hidden whitespace-nowrap leading-4">
            <div class="flex items-center gap-[6px]">
              <svg class="w-[30px] h-4" viewBox="0 0 30 16"><path fill="#fff" stroke="#919191" d="M.5 3.500h8v8h-8z"/><path stroke="#2a53b0" d="M2.500 7.500h4"/><path stroke="#777" stroke-dasharray="1 1" d="M10 7.500h5M23.500 13v3"/><use href="#panel" x="16" y="2" width="14" height="13"/></svg>Station Explorer</div>
            <div class="flex items-center gap-[6px] pl-[19px]">
              <svg class="w-[30px] h-4" viewBox="0 0 30 16"><path fill="#fff" stroke="#919191" d="M.5 3.500h8v8h-8z"/><path stroke="#2a53b0" d="M2.500 7.500h4"/><path stroke="#777" stroke-dasharray="1 1" d="M10 7.500h5M4.500 0v3"/><path fill="#d5d8dc" stroke="#aaa" d="M16.500 1.500h13v13h-13z"/><path stroke="#3b7ebd" stroke-width="2" d="M19 5l4 3 4-3M23 3v9"/></svg>COM4</div>
            <div class="flex items-center gap-[6px] pl-[41px]">
              <svg class="w-[27px] h-4 shrink-0" viewBox="0 0 27 16"><path fill="none" stroke="#777" stroke-dasharray="1 1" d="M.5 0v8.500h11"/><use href="#panel" x="13" y="2" width="14" height="13"/></svg>EPSOLAR 3210A</div>
          </div>

          <div class="flex-1 min-w-0 flex flex-col border-l-2 border-[#646464]">
            <div class="h-[404px] shrink-0 flex flex-col border-t-2 border-b border-[#646464]">
              <div class="flex-1 min-h-0 flex">
                <div class="flex-1 min-w-0 overflow-hidden">
                  <form class="mt-2 mr-[19px] h-[52px] pt-[2px] flex items-center border border-l-0 border-[#dcdcdc] text-[#a0a0a0]">
                    <div class="w-1 h-[21px] bg-[#cfcfcf]"></div>
                    <label for="device" class="ml-[104px] w-[72px]">Device ID</label>
                    <input id="device" value="1" disabled class="w-[95px] h-5 border border-[#c3c3c3] px-[3px] text-[#777] text-[12px]"/>
                    <label for="interval" class="ml-[59px] w-[113px]">Interval(s)</label>
                    <input id="interval" value="10" disabled class="w-[81px] h-5 border border-[#c3c3c3] px-[3px] text-[#777] text-[12px]"/>
                    <button type="button" class="ml-auto mr-[68px] w-[92px] h-[23px] border border-[#adadad] bg-[#e1e1e1] text-black">Stop Monitor</button>
                  </form>

                  <div class="mt-[6px] -ml-[44px] flex gap-[6px] font-['Liberation_Sans',Arial,sans-serif] text-[14px] leading-5">
                    <fieldset class="w-[397px] shrink-0 h-[340px] border border-[#dcdcdc] pl-5">
                      <legend class="italic -ml-4 px-[3px]">Battery Information</legend>
                      <div class="pt-3 grid grid-cols-[194px_1fr] gap-y-[18px] text-[15px] font-bold">
                        <div><label for="bv">Battery Voltage(V)</label>
                          <div class="mt-[5px] flex items-start gap-[17px]"><svg class="w-[31px] h-[33px]"><use href="#meter"/></svg><input id="bv" value="13,41" class="w-[87px] h-[23px] mt-[3px] border border-[#7a7a7a] bg-white text-center text-[14px] font-normal italic"/></div></div>
                        <div><label for="bc">Battery Current(A)</label>
                          <div class="mt-[5px] flex items-start gap-[17px]"><svg class="w-[31px] h-[33px]"><use href="#meter"/></svg><input id="bc" value="0,23" class="w-[87px] h-[23px] mt-[3px] border border-[#7a7a7a] bg-white text-center text-[14px] font-normal italic"/></div></div>
                        <div><label for="xv">Max Voltage(V)</label>
                          <div class="mt-[5px] flex items-start gap-[17px]"><svg class="w-[31px] h-[33px]"><use href="#meter2"/></svg><input id="xv" value="15,02" class="w-[87px] h-[23px] mt-[3px] border border-[#7a7a7a] bg-white text-center text-[14px] font-normal italic"/></div></div>
                        <div><label for="nv">Min Voltage(V)</label>
                          <div class="mt-[5px] flex items-start gap-[17px]"><svg class="w-[31px] h-[33px]"><use href="#meter2"/></svg><input id="nv" value="12,47" class="w-[87px] h-[23px] mt-[3px] border border-[#7a7a7a] bg-white text-center text-[14px] font-normal italic"/></div></div>
                        <div><label for="bt">Battery Temp.(℃)</label>
                          <div class="mt-[5px] flex items-start gap-[17px]"><svg class="w-[31px] h-[33px]" viewBox="0 0 31 33"><path fill="#dfe4f5" d="M0 0h31v33H0z"/></svg><input id="bt" value="23,00" class="w-[87px] h-[23px] border border-[#7a7a7a] bg-white text-center text-[14px] font-normal italic"/></div></div>
                        <div><label for="soc">Battery SOC(%)</label>
                          <div class="mt-[5px] flex items-start gap-[17px]"><svg class="w-[31px] h-[33px]" viewBox="0 0 31 33"><path fill="#fff" d="M0 0h31v33H0z"/><path fill="#999" opacity=".5" d="M14 26l14-3 3 4-18 4z"/><g fill="none" stroke="#b81a10"><circle cx="8" cy="8" r="5" stroke-width="5"/><circle cx="25" cy="20" r="4.500" stroke-width="5"/><path stroke-width="5.500" d="M25 1 11 30"/></g><path stroke="#ea6a5c" d="M24 2 11 28"/></svg><input id="soc" value="95" class="w-[87px] h-[23px] border border-[#7a7a7a] bg-white text-center text-[14px] font-normal italic"/></div></div>
                        <div class="pl-7"><label for="cs">Charging Status</label>
                          <input id="cs" value="Float Charge" class="block mt-3 w-[141px] h-[21px] border border-[#7a7a7a] bg-white text-center text-[12px] font-normal italic text-[#008000]"/></div>
                        <div class="-ml-[10px] flex gap-2"><svg class="w-[31px] h-[50px]" viewBox="0 0 31 50"><path fill="#fff" d="M0 0h31v50H0z"/><path fill="#1b1e22" d="M1 7l5-3h19l4 3v37l-4 3H5l-4-4z"/><path fill="#3b4147" d="M1 12h28v2H1z"/><path stroke="#777" fill="none" d="M8 1v5M22 2v4"/><path fill="#c22" d="M2 4l5-1v2L2 7z"/><path fill="#bbb" d="M4 19h19v5H4z"/><path stroke="#222" stroke-dasharray="2 1" d="M5 21.500h17"/><path fill="#aaa" d="M8 27h12v1H8zM5 31h18v1H5zM5 35h8v1H5zM5 39h8v1H5zM15 38h8v4h-8zM5 44h18v1H5z"/></svg>
                          <div><label for="bs">Battery Status</label>
                          <input id="bs" value="Normal" class="block mt-3 w-[141px] h-[21px] border border-[#7a7a7a] bg-white text-center text-[12px] font-normal italic text-[#008000]"/></div></div>
                      </div>
                    </fieldset>

                    <fieldset class="w-[208px] shrink-0 h-[340px] border border-[#dcdcdc] pl-[22px]">
                      <legend class="italic -ml-4 px-[3px]">DC Load Information</legend>
                      <div class="pt-3 grid gap-y-[18px] text-[15px] font-bold">
                        <div><label for="lc">Load Current(A)</label>
                          <div class="mt-[5px] flex items-start gap-4"><svg class="w-[30px] h-[33px]"><use href="#meter"/></svg><input id="lc" value="0,42" class="w-[87px] h-[23px] mt-[3px] border border-[#7a7a7a] bg-white text-center text-[14px] font-normal italic"/></div></div>
                        <div><label for="lv">Load Voltage(V)</label>
                          <div class="mt-[5px] flex items-start gap-4"><svg class="w-[30px] h-[33px]"><use href="#meter2"/></svg><input id="lv" value="13,41" class="w-[87px] h-[23px] mt-[3px] border border-[#7a7a7a] bg-white text-center text-[14px] font-normal italic"/></div></div>
                        <div><label for="lp">Load Power(W)</label>
                          <div class="mt-[5px] flex items-start gap-4"><svg class="w-[30px] h-[33px]"><use href="#meter"/></svg><input id="lp" value="5,63" class="w-[87px] h-[23px] border border-[#7a7a7a] bg-white text-center text-[14px] font-normal italic"/></div></div>
                        <div class="-ml-[5px] flex gap-2"><svg class="w-[26px] h-[50px] shrink-0" viewBox="0 0 26 50"><path fill="#fff" d="M0 0h26v50H0z"/><path fill="#eef3ee" stroke="#c4c9c4" d="M8 39c0-6-7-9-7-18a12 12 0 0 1 24 0c0 9-7 12-7 18z"/><path fill="none" stroke="#5b3a18" stroke-width="1.500" d="M13 38V26"/><path fill="#63c51c" d="m13 30-5-4-4 1 1-4-1-4 4 1 1-4 4 1 2-3 2 3 4-1v4l2 3-4 2 1 3-4-1z"/><path fill="#a5e24f" d="m7 21 3 3-3 1zM14 17l3 3-4 2zM18 22l3 1-3 2z"/><path fill="#6b4423" d="M8 38q5-3 10 0v2H8z"/><path fill="#3a3f44" d="M8 40h10v7l-2 3h-6l-2-3z"/><path stroke="#8aa" d="M8 43h10M8 46h10"/></svg>
                          <div><label for="ls" class="pl-[5px]">Load Status</label>
                          <input id="ls" value="On" class="block mt-2 w-[145px] h-[21px] border border-[#7a7a7a] bg-white text-center text-[12px] font-normal italic text-[#008000]"/></div></div>
                      </div>
                    </fieldset>

                    <div class="flex-1 min-w-0 flex flex-col gap-[7px]">
                      <fieldset class="h-[227px] border border-[#dcdcdc] pl-[5px]">
                        <legend class="italic ml-[2px] px-[3px]">Controller Information</legend>
                        <div class="pt-7 text-[15px] font-bold">
                          <label for="dt" class="pl-3">Device Temp.(℃)</label>
                          <div class="pl-4 mt-2 flex items-start gap-4"><svg class="w-[29px] h-[33px]" viewBox="0 0 29 33"><path fill="#dcdde0" d="M0 0h29v33H0z"/><path fill="#fff" stroke="#aaa" d="M5 6h4v12l2 4H3l2-4zM16 2h5v18h-5z"/><path fill="#c2188c" d="M5 17h4v5c3 3 2 9-2 9s-5-6-2-9z"/><path fill="#1b86b5" d="M16 15h5v6c6 3 5 12-2.500 12S10 24 16 21z"/><circle cx="16" cy="27" r="2" fill="#7fc8e4"/></svg>
                            <input id="dt" value="26,61" class="w-[87px] h-[23px] mt-[2px] border border-[#7a7a7a] bg-white text-center text-[14px] font-normal italic"/></div>
                          <label for="ds" class="block mt-6 pl-3">Device Status</label>
                          <div class="mt-[5px] flex items-start gap-2"><svg class="w-[43px] h-[30px]" viewBox="0 0 43 30"><path fill="#fff" d="M0 0h43v30H0z"/><path fill="#42494f" d="M2 5 40 4l1 20-38 4z"/><path fill="#2b3035" d="M2 5h5v22H3z"/><path fill="#9fc3cf" d="M20 10h14v6H20z"/><path fill="#e2471f" d="M19 18h16v2H19zM11 6h6v1h-6z"/><path fill="#ddd" d="M12 11h2v1h-2zM12 14h2v1h-2zM12 17h2v1h-2zM20 21h12v1H20zM14 25h2v1h-2zM20 25h2v1h-2zM26 24h2v1h-2z"/></svg>
                            <input id="ds" value="Normal" class="w-[124px] h-[21px] mt-1 border border-[#7a7a7a] bg-white text-center text-[12px] font-normal italic text-[#008000]"/></div>
                        </div>
                      </fieldset>
                      <fieldset class="h-[105px] border border-[#dcdcdc] pl-[5px]">
                        <legend class="italic ml-[2px] px-[3px]">Load Control</legend>
                        <div class="pt-[5px] text-[15px] font-bold text-center">
                          <p class="pl-[3px]">Manually</p>
                          <div class="mt-1 flex justify-center gap-[18px]">
                            <button type="button" class="w-10 h-[27px] border border-[#adadad] bg-[#e1e1e1]">On</button>
                            <button type="button" class="w-[37px] h-[27px] border border-[#adadad] bg-[#e1e1e1]">Off</button>
                          </div>
                        </div>
                      </fieldset>
                    </div>
                  </div>
                </div>
                <div class="w-[9px] flex flex-col bg-[#f0f0f0]">
                  <svg class="w-[9px] h-[17px]" viewBox="0 0 9 17"><path fill="none" stroke="#505050" stroke-width="2" d="m3 12 6-6"/></svg>
                  <div class="h-[332px] bg-[#cdcdcd]"></div>
                  <svg class="w-[9px] h-[17px] mt-auto" viewBox="0 0 9 17"><path fill="none" stroke="#505050" stroke-width="2" d="m3 5 6 6"/></svg>
                </div>
              </div>
              <div class="h-4 flex items-center border-t border-white">
                <svg class="w-[204px] h-[9px]" viewBox="0 0 204 9"><path fill="none" stroke="#505050" stroke-width="2" d="m10 0-4 4.500L10 9"/></svg>
                <div class="flex-1 h-full bg-[#cdcdcd]"></div>
                <svg class="w-[27px] h-[9px]" viewBox="0 0 27 9"><path fill="none" stroke="#505050" stroke-width="2" d="m6 0 4 4.500L6 9"/></svg>
              </div>
            </div>

            <!-- Current chart -->
            <div class="flex-1 min-h-0 mt-[5px] flex border-t border-[#646464]">
              <div class="w-[17px] h-[133px] border-r border-b border-[#dcdcdc]"></div>
              <div class="ml-[6px] w-[53px] flex flex-col items-end border-x border-l-[#dcdcdc] border-r-white text-[10px]">
                <button class="w-[48px] h-[27px] pb-2 border-l border-l-white border-b-2 border-b-[#808080]">Cur.</button>
                <button class="w-[46px] h-[37px] border-l border-l-white border-b-2 border-b-[#808080]">Power</button>
              </div>
              <svg class="flex-1 min-w-0 h-[133px]" viewBox="1218 906 693 133" preserveAspectRatio="xMinYMin slice" font-size="12">
                <path fill="none" stroke="#000" d="M1307.500 1045V915.500h504V1045M1300 1007.500h8"/>
                <path fill="none" stroke="#000" stroke-dasharray="4 2" d="M1308 1007.500h504M1408.500 916v130M1509.500 916v130M1609.500 916v130M1710.500 916v130"/>
                <g fill="none" stroke-width="1.800"><path stroke="red" d="m1408 938.500 101 23 101 41 101-36"/><path stroke="#00f" d="m1408 975.500 101 9 101 32 101-18"/><path stroke="green" d="m1408 1030 40 20"/></g>
                <g fill="none" stroke-width="2"><path stroke="red" d="M1845 916h22"/><path stroke="green" d="M1845 930h22"/><path stroke="#00f" d="M1845 944h22"/></g>
                <g font-size="14" font-family="Liberation Sans"><text x="1279" y="920">0,6</text><text x="1279" y="1011">0,4</text></g>
                <text transform="translate(1259 954) rotate(-90)" font-size="12">Cur. / A</text>
                <g font-size="11"><text x="1872" y="921">Solar</text><text x="1872" y="935">Battery</text><text x="1872" y="949">Load</text></g>
              </svg>
              <div class="w-[9px] flex flex-col">
                <svg class="w-[9px] h-[45px]" viewBox="0 0 9 45"><path fill="none" stroke="#505050" stroke-width="2" d="m3 12 6-6"/></svg>
                <div class="h-[74px] bg-[#cdcdcd]"></div>
              </div>
            </div>
          </div>
        </div>
      </section>
    </div>
  </main>

  <!-- Taskbar -->
  <footer class="h-10 shrink-0 flex items-center bg-linear-to-r from-[#0a0e18] from-10% via-[#060c14] via-50% to-[#333] to-52% text-white">
    <button aria-label="Start" class="w-12 flex justify-center"><svg class="w-4 h-4" viewBox="0 0 16 16" fill="#fff"><path d="M0 2.200 6.500 1.300v6.200H0zM7.300 1.200 16 0v7.500H7.300zM0 8.300h6.500v6.300L0 13.700zM7.300 8.300H16V16l-8.700-1.200z"/></svg></button>
    <div class="w-[344px] h-full flex items-center bg-[#f2f2f2] text-[#444] border-t border-[#ccc] px-[10px]">
      <svg class="w-5 h-5 mr-[11px]" viewBox="0 0 20 20"><circle cx="10" cy="10" r="8.500" fill="none" stroke="#111" stroke-width="2.500"/></svg>
      <input aria-label="Suche" placeholder="Zur Suche Text hier eingeben" class="flex-1 min-w-0 outline-none text-[14px] placeholder:text-[#444]"/>
      <svg class="w-3 h-4 mr-[5px]" viewBox="0 0 12 16" fill="none" stroke="#222"><rect x="3.500" y=".5" width="5" height="10"/><path d="M.5 8v4.500h11V8M6 12.500V16M3.500 15.500h5"/></svg>
    </div>
    <button aria-label="Taskansicht" class="w-12 mr-[3px] flex justify-center"><svg class="w-4 h-4" viewBox="0 0 16 16" fill="none" stroke="#fff"><path d="M.5 0v2.500h11V0M.5 4.500h11v7H.5zM.5 16v-2.500h11V16M14.500 0v3M14.500 9v7"/><path fill="#fff" d="M14 5h1v2h-1z"/></svg></button>
    <div class="h-full flex items-center gap-px">
      <button aria-label="Edge" class="w-12 flex justify-center"><svg class="w-5 h-[22px]" viewBox="0 0 20 22"><path fill="#0c7bdc" d="M0 10C1 3 6 0 10.500 0 17 0 20 5 20 10v3H6.500c.3 5 7 6 12 3v4.500C12 24 2 22 2 13c0-4 3-7 5.500-8C5 5.500 2 7 0 10zm6.500-1H14c0-5-7-5-7.500 0z"/></svg></button>
      <button aria-label="Explorer" class="w-12 flex justify-center"><svg class="w-[22px] h-5" viewBox="0 0 22 20"><path fill="#e9b84a" d="M0 1h7l1 2h13v16H0z"/><path fill="#fbe08b" d="M1 5h21v14H1z"/><path fill="#3bb3ea" d="M4 19v-8h14v8h-4v-4H8v4z"/></svg></button>
      <button aria-label="Store" class="w-12 flex justify-center"><svg class="w-6 h-6" viewBox="0 0 24 24"><path fill="#fff" d="M0 6h24v18H0z"/><path fill="none" stroke="#fff" stroke-width="1.300" d="M7 8V4c0-4 9-4 9 0v4M9 6c0-4 9-3 9 0"/><path fill="#f25022" d="M6 9h5v5H6z"/><path fill="#7fba00" d="M12.500 9h5v5h-5z"/><path fill="#00a4ef" d="M6 15.500h5v5H6z"/><path fill="#ffb900" d="M12.500 15.500h5v5h-5z"/></svg></button>
      <button aria-label="Media Player" class="w-12 flex justify-center"><svg class="w-5 h-5" viewBox="0 0 20 20"><path fill="#7fb4d8" d="M3 0h17v17H3z"/><path fill="#b9d9ee" stroke="#4d87b0" d="M.5 1.500h16v17H.5z"/><circle cx="9" cy="10" r="6.500" fill="#f07e1e"/><path fill="#fff" d="M7 6v8l6-4z"/></svg></button>
      <button aria-label="Apps" class="w-12 flex justify-center"><svg class="w-[22px] h-6" viewBox="0 0 22 24"><rect width="22" height="24" rx="2" fill="#f1f1f1"/><path fill="#e33" d="M5 5h3v3H5zM9.500 5h3v3h-3zM14 5h3v3h-3z"/><path fill="#2a62d9" d="M9.500 10h3v3h-3z"/><path fill="#2a9d3a" d="M5 10h3v3H5zM5 15h3v3H5zM9.500 15h3v3h-3z"/><path fill="#f5b400" d="M14 10h3v3h-3zM14 15h3v3h-3z"/></svg></button>
      <button aria-label="Chrome" class="w-12 flex justify-center"><svg class="w-[22px] h-[22px]" viewBox="0 0 22 22"><circle cx="11" cy="11" r="11" fill="#fbc116"/><path fill="#e33b2e" d="M1.500 5.500A11 11 0 0 1 20.500 5.500H11L6 14z"/><path fill="#30a14e" d="M1.500 5.500 7 14l6 2-3 6A11 11 0 0 1 1.500 5.500z"/><circle cx="11" cy="11" r="5" fill="#fff"/><circle cx="11" cy="11" r="4" fill="#4285f4"/></svg></button>
      <button aria-label="Mail" class="w-12 flex justify-center"><svg class="w-6 h-5" viewBox="0 0 24 20"><path fill="#fff" d="M12 0 24 7v12H0V7z"/><path fill="#060c14" d="M1 7.500h22l-9 5.500 5 5-17-10z"/></svg></button>
      <button aria-label="Internet Explorer" class="w-12 h-full flex flex-col items-center justify-end"><svg class="w-[23px] h-[23px] mb-[6px]"><use href="#ie"/></svg><span class="w-10 h-[2px] bg-[#76b9ed]"></span></button>
      <button aria-label="DAEMON" class="w-12 h-full flex justify-center"><span class="w-10 h-full flex flex-col items-center justify-end bg-linear-to-r from-[#336b36] from-30% to-[#2c3138] to-30%"><svg class="w-6 h-6 mb-[6px]" viewBox="0 0 24 24"><circle cx="12" cy="12" r="11.500" fill="#4f9ad8" stroke="#bcdcf4"/><path fill="#b5451f" d="M4 6c4-6 14-5 16 1l1 8-6 6H8l-5-6z"/><path fill="#f5c79a" d="M5 11c3-4 10-3 12 1 2 4-1 9-5 9s-8-5-7-10z"/><path fill="#ffb51f" d="M5 5l13 1 1 3-15 0z"/><circle cx="19" cy="13" r="2.500" fill="#f5c79a"/><circle cx="9" cy="13" r="1" fill="#222"/><circle cx="14" cy="13" r="1" fill="#222"/><path stroke="#813a1b" fill="none" d="M9 17q3 2 5-1"/></svg><span class="w-10 h-[2px] bg-[#3fe03a]"></span></span></button>
      <button aria-label="VSPE" class="w-12 h-full flex flex-col items-center justify-end"><svg class="w-6 h-6 mb-[6px]"><use href="#plug"/></svg><span class="w-10 h-[2px] bg-[#76b9ed]"></span></button>
      <button aria-label="EPEVER" class="w-12 h-full flex flex-col items-center justify-end bg-[#484d53]"><svg class="w-6 h-2 mb-[14px]" viewBox="0 0 24 8"><path fill="none" stroke="#1b8fd0" stroke-width="1.100" d="M23 1C12 0 3 0 1 3s3 4 5 4"/><path fill="none" stroke="#1b8fd0" stroke-width="1.500" d="M5 4h4M10 4.500h3M14 4h4M19 4.500h3M6 5.500h12"/></svg><span class="w-full h-[2px] bg-[#76b9ed]"></span></button>
    </div>
    <div class="ml-auto flex items-center">
      <svg class="w-4 h-4 mr-6" viewBox="0 0 16 16" fill="none" stroke="#fff" stroke-width="1.100"><circle cx="4.500" cy="8" r="2.500"/><path d="M.5 15c0-6 8-6 8 0"/><circle cx="11" cy="3" r="2.500"/><path d="M8 8c2-3 7-3 7 2"/></svg>
      <svg class="w-3 h-[7px] mr-[10px]" viewBox="0 0 12 7"><path fill="none" stroke="#fff" stroke-width="1.200" d="m.5 6.500 5.500-5.500 5.500 5.500"/></svg>
      <svg class="w-4 h-4 mr-2" viewBox="0 0 16 16"><path fill="#ff7800" d="M5 3l5-.5L14 0l1.500 2L14 6v5l1 3-2 2-4-2-5 1-3 .5L0 12l3-3z"/><text x="5" y="11" font-size="9" font-weight="700" fill="#fff">a</text></svg>
      <svg class="w-4 h-4 mr-2" viewBox="0 0 16 16"><path fill="#ddd" d="M0 0h16v16H0z"/><path fill="#e20074" d="M2 1h4v3H2zM8 0h8v5l-3 2-5-3zM1 5l6 2-2 2zM10 9h6v7h-6z"/><path stroke="#333" stroke-dasharray="1 1" d="M0 10l8 4M0 13l6 3M2 9l7 4"/><path stroke="#fff" stroke-width="1.200" d="M11 10.500h4M13 10.500V15"/></svg>
      <svg class="w-4 h-[13px] mr-2" viewBox="0 0 16 13" fill="none" stroke="#fff"><path d="M5 2.500h10.500v7H4.500V5M10 9.500v3M6 12.500h7M.5.500h4v3h-4zM2.500 4v5"/></svg>
      <svg class="w-4 h-[13px] mr-3" viewBox="0 0 16 13" fill="none" stroke="#fff"><path d="M.5 4.500h2l3.500-3v10L2.500 8.500h-2zM8 4.500q1.500 2 0 4M10 3q3 3.500 0 7"/><path stroke="#888" d="M12 1.500q4 5 0 10M14 .5q4 6 0 12"/></svg>
      <span class="text-[11px] mr-3">DEU</span>
      <div class="w-[55px] text-center text-[11px] leading-[18px]">19:27<br/>18.08.2018</div>
      <svg class="w-6 h-6 ml-[17px] mr-3" viewBox="0 0 24 24"><path fill="#fff" d="M0 0h16v12h-6l-4 3v-3H0z"/><path stroke="#333" d="M3 3.500h10M3 6.500h10M3 9.500h6"/><circle cx="15.500" cy="15.500" r="7.500" fill="#3c3c3c" stroke="#999"/><text x="15.500" y="20" font-size="12" fill="#fff" text-anchor="middle">2</text></svg>
      <div class="h-10 w-[5px] border-l border-[#777]"></div>
    </div>
  </footer>

  <script>
    // draw every series as a line with a filled area down to its base
    document.querySelectorAll("polyline[data-base]").forEach((line) => {
      const base = line.dataset.base;
      const pts = line.getAttribute("points").trim().split(/\s+/);
      const area = document.createElementNS("http://www.w3.org/2000/svg", "polygon");
      const first = pts[0].split(",")[0];
      const last = pts[pts.length - 1].split(",")[0];
      area.setAttribute("points", `${first},${base} ${pts.join(" ")} ${last},${base}`);
      area.setAttribute("fill", "#7eb26d");
      area.setAttribute("fill-opacity", "0.8");
      line.before(area);
      line.setAttribute("fill", "none");
      line.setAttribute("stroke", "#7eb26d");
      line.setAttribute("stroke-width", "3");
      line.setAttribute("stroke-linejoin", "round");
      line.setAttribute("vector-effect", "non-scaling-stroke");
    });
  </script>

</body>
</html>
